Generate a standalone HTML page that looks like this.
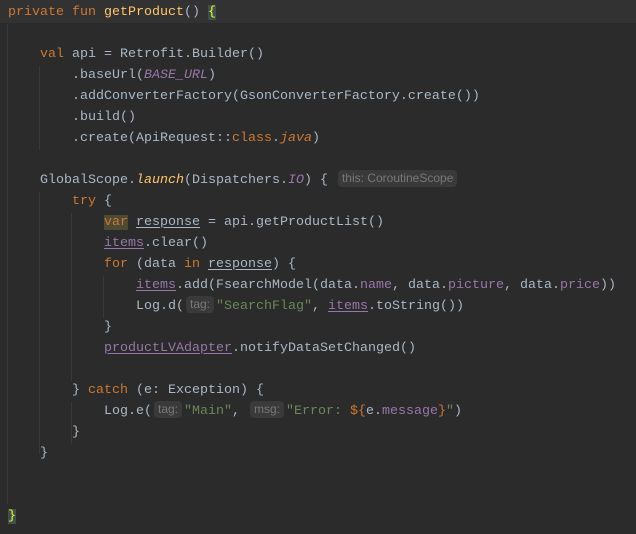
<!DOCTYPE html>
<html><head><meta charset="utf-8"><style>
html,body{margin:0;padding:0;background:#2b2b2b;width:636px;height:534px;overflow:hidden}
body{position:relative;font-family:"Liberation Mono",monospace;font-size:13.33px;color:#a9b7c6}
.l{position:absolute;left:0;height:21px;line-height:21px;white-space:pre}
.cur{position:absolute;left:0;top:0;width:636px;height:23px;background:#323232}
.g{position:absolute;width:1px;background:#393939}
.k{color:#cc7832}.f{color:#ffc66d}.c{color:#9876aa;font-style:italic}.p{color:#9876aa}
.s{color:#6a8759}.u{text-decoration:underline;text-underline-offset:2px}
.pu{color:#9876aa;text-decoration:underline;text-underline-offset:2px}
.fi{color:#ffc66d;font-style:italic}.ci{color:#cc7832;font-style:italic}
.h{display:inline-block;font-family:"Liberation Sans",sans-serif;font-size:12px;color:#787878;background:#3a3a3a;border-radius:4px;line-height:17px;padding:0 4px;margin:0 2px;vertical-align:1px}
.br{background:#3b514d;color:#ffef28}
.vb{background:#4d4a36}
</style></head><body>
<div class="cur"></div>
<div class="g" style="left:7px;top:24px;height:480px"></div>
<div class="g" style="left:39px;top:66px;height:84px"></div>
<div class="g" style="left:39px;top:192px;height:262px"></div>
<div class="g" style="left:71px;top:213px;height:168px"></div>
<div class="g" style="left:71px;top:402px;height:42px"></div>
<div class="g" style="left:103px;top:276px;height:42px"></div>

<div class="l" style="top:2px;left:8px"><span class="k">private fun </span><span class="f">getProduct</span>() <span class="br">{</span></div>
<div class="l" style="top:44px;left:40px"><span class="k">val </span>api = Retrofit.Builder()</div>
<div class="l" style="top:65px;left:72px">.baseUrl(<span class="c">BASE_URL</span>)</div>
<div class="l" style="top:86px;left:72px">.addConverterFactory(GsonConverterFactory.create())</div>
<div class="l" style="top:107px;left:72px">.build()</div>
<div class="l" style="top:128px;left:72px">.create(ApiRequest::<span class="k">class</span>.<span class="ci">java</span>)</div>
<div class="l" style="top:170px;left:40px">GlobalScope.<span class="fi">launch</span>(Dispatchers.<span class="c">IO</span>) { <span class="h">this: CoroutineScope</span></div>
<div class="l" style="top:191px;left:72px"><span class="k">try </span>{</div>
<div class="l" style="top:212px;left:104px"><span class="k vb">var</span> <span class="u">response</span> = api.getProductList()</div>
<div class="l" style="top:233px;left:104px"><span class="pu">items</span>.clear()</div>
<div class="l" style="top:254px;left:104px"><span class="k">for </span>(data <span class="k">in </span><span class="u">response</span>) {</div>
<div class="l" style="top:275px;left:136px"><span class="pu">items</span>.add(FsearchModel(data.<span class="p">name</span>, data.<span class="p">picture</span>, data.<span class="p">price</span>))</div>
<div class="l" style="top:296px;left:136px">Log.d(<span class="h">tag:</span><span class="s">"SearchFlag"</span>, <span class="pu">items</span>.toString())</div>
<div class="l" style="top:317px;left:104px">}</div>
<div class="l" style="top:338px;left:104px"><span class="pu">productLVAdapter</span>.notifyDataSetChanged()</div>
<div class="l" style="top:380px;left:72px">} <span class="k">catch </span>(e: Exception) {</div>
<div class="l" style="top:401px;left:104px">Log.e(<span class="h">tag:</span><span class="s">"Main"</span>, <span class="h">msg:</span><span class="s">"Error: </span><span class="k">${</span>e.<span class="p">message</span><span class="k">}</span><span class="s">"</span>)</div>
<div class="l" style="top:422px;left:72px">}</div>
<div class="l" style="top:443px;left:40px">}</div>
<div class="l" style="top:506px;left:8px"><span class="br">}</span></div>
</body></html>
